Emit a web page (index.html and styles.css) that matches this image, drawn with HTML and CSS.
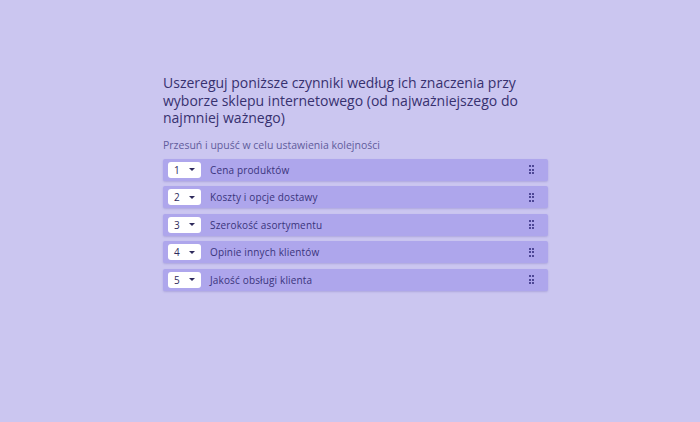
FILE: index.html
```html
<!DOCTYPE html>
<html lang="pl">
<head>
  <meta charset="UTF-8">
  <meta name="viewport" content="width=device-width, initial-scale=1.0">
  <title>Ranking</title>
  <link rel="stylesheet" href="styles.css">
</head>
<body>
  <div class="question">
    <h2 class="question-title">Uszereguj poniższe czynniki według ich znaczenia przy wyborze sklepu internetowego (od najważniejszego do najmniej ważnego)</h2>
    <p class="question-hint">Przesuń i upuść w celu ustawienia kolejności</p>

    <ul class="rank-list">
      <li class="rank-item">
        <div class="rank-select"><span>1</span><span class="caret"></span></div>
        <span class="rank-label">Cena produktów</span>
        <span class="handle"><i></i><i></i><i></i><i></i><i></i><i></i></span>
      </li>
      <li class="rank-item">
        <div class="rank-select"><span>2</span><span class="caret"></span></div>
        <span class="rank-label">Koszty i opcje dostawy</span>
        <span class="handle"><i></i><i></i><i></i><i></i><i></i><i></i></span>
      </li>
      <li class="rank-item">
        <div class="rank-select"><span>3</span><span class="caret"></span></div>
        <span class="rank-label">Szerokość asortymentu</span>
        <span class="handle"><i></i><i></i><i></i><i></i><i></i><i></i></span>
      </li>
      <li class="rank-item">
        <div class="rank-select"><span>4</span><span class="caret"></span></div>
        <span class="rank-label">Opinie innych klientów</span>
        <span class="handle"><i></i><i></i><i></i><i></i><i></i><i></i></span>
      </li>
      <li class="rank-item">
        <div class="rank-select"><span>5</span><span class="caret"></span></div>
        <span class="rank-label">Jakość obsługi klienta</span>
        <span class="handle"><i></i><i></i><i></i><i></i><i></i><i></i></span>
      </li>
    </ul>
  </div>
</body>
</html>
```

FILE: styles.css
```css
body {
  margin: 0;
  background-color: #cbc6f0;
  font-family: "Open Sans", "DejaVu Sans", sans-serif;
  color: #3b3576;
  height: 422px;
  overflow: hidden;
}

.question {
  width: 385px;
  margin-left: 163px;
  padding-top: 74px;
}

.question-title {
  font-size: 14px;
  font-weight: 400;
  line-height: 17.5px;
  margin: 0 0 11px 0;
  color: #37316f;
}

.question-hint {
  font-size: 10.5px;
  margin: 0 0 7px 0;
  color: #615c9c;
}

.rank-list {
  list-style: none;
  margin: 0;
  padding: 0;
}

.rank-item {
  display: flex;
  align-items: center;
  height: 22px;
  margin-bottom: 5.5px;
  padding: 0 14px 0 5px;
  background-color: #aea6ec;
  border-radius: 2px;
  box-shadow: 0 1px 2px rgba(90, 80, 170, 0.25);
}

.rank-select {
  display: flex;
  align-items: center;
  justify-content: space-between;
  width: 33px;
  height: 16px;
  box-sizing: border-box;
  padding: 0 6px 0 6px;
  background-color: #fff;
  border-radius: 3px;
  font-size: 10px;
  color: #2e2a5c;
}

.caret {
  width: 0;
  height: 0;
  border-left: 3px solid transparent;
  border-right: 3px solid transparent;
  border-top: 3.5px solid #2e2a5c;
}

.rank-label {
  flex: 1;
  margin-left: 9px;
  font-size: 10px;
  letter-spacing: 0.15px;
  color: #3a347c;
}

.handle {
  display: grid;
  grid-template-columns: repeat(2, 2px);
  gap: 1.5px;
}

.handle i {
  width: 2px;
  height: 2px;
  background-color: #4e4796;
}
```
